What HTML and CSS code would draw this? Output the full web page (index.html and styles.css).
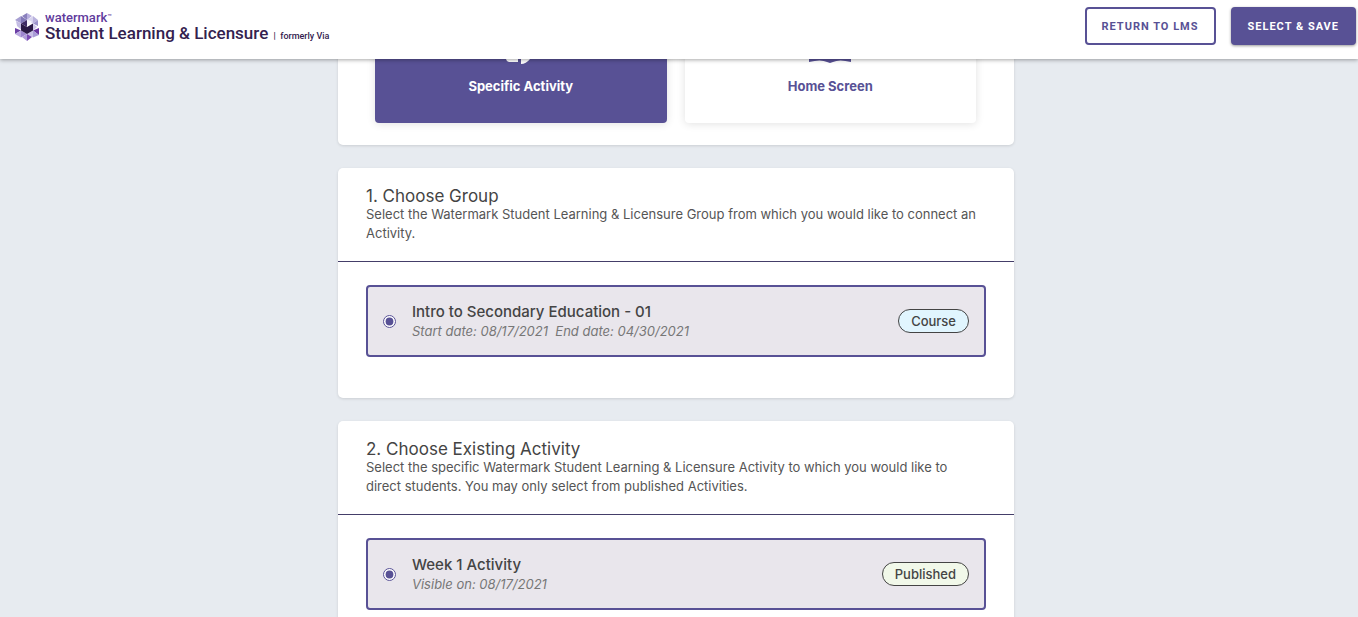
FILE: index.html
```html
<!DOCTYPE html>
<html lang="en">
<head>
    <meta charset="UTF-8">
    <meta name="viewport" content="width=device-width, initial-scale=1.0">
    <title>Student Learning &amp; Licensure</title>
    <link rel="stylesheet" href="styles.css">
</head>
<body>
    <header class="topbar">
        <div class="brand">
            <svg class="brand-mark" viewBox="0 0 24 28" aria-hidden="true">
                <path fill="#8a80bd" d="M12 0 7 3 12 7z"/>
                <path fill="#b7aede" d="M12 0v7l5-4z"/>
                <path fill="#a79fd2" d="M6 3 0 7l6 3.500z"/>
                <path fill="#8278b8" d="M6 3v7.500L12 7z"/>
                <path fill="#d8d4ee" d="M18 3v7.500L12 7z"/>
                <path fill="#b9b2dd" d="M18 3l5 4-5 3.500z"/>
                <path fill="#9d94cb" d="M23 7v6l-5-2.500z"/>
                <path fill="#c3bce3" d="M1 8l5 2.500v6L2 13z"/>
                <path fill="#cfc9e9" d="M18 10.500v7l4-3.500z"/>
                <path fill="#6b3fa5" d="M0 15v6l6-3.500z"/>
                <path fill="#b9a8df" d="M0 21l6-3.500v7z"/>
                <path fill="#6a35a0" d="M24 15v7l-6-4.500z"/>
                <path fill="#a99cd6" d="M24 22l-6-4.500v7z"/>
                <path fill="#9d86cf" d="M6 17.500v7l6-3.500z"/>
                <path fill="#c9bfe8" d="M18 17.500v7L12 21z"/>
                <path fill="#b09ddb" d="M12 21v7l-5-4z"/>
                <path fill="#7b4bb3" d="M12 21v7l5-4z"/>
                <path fill="#2a1a45" d="M6 10.500 12 14l6-3.500v7L12 21l-6-3.500z"/>
                <path fill="#3d2a63" d="M6 10.500 12 7v7z"/>
                <path fill="#f6f5fb" d="M12 7v6l5-5z"/>
            </svg>
            <div class="brand-text">
                <div class="brand-name">watermark<span class="tm">™</span></div>
                <div class="brand-product">Student Learning &amp; Licensure <span class="formerly">|&nbsp; formerly Via</span></div>
            </div>
        </div>
        <div class="actions">
            <button type="button" class="btn btn-outline">RETURN TO LMS</button>
            <button type="button" class="btn btn-solid">SELECT &amp; SAVE</button>
        </div>
    </header>

    <main class="content">
        <section class="card targets">
            <button type="button" class="target active">
                <svg viewBox="0 0 48 44" aria-hidden="true">
                    <path fill="currentColor" d="M9 4h28v13L21 33v8H13q-4 0-4-4zM24 37l15-17 6 6-12 12q-4 5-9 5z"/>
                </svg>
                Specific Activity
            </button>
            <button type="button" class="target">
                <svg viewBox="0 0 48 44" aria-hidden="true">
                    <path fill="currentColor" d="M3 6q12-4 21 2 9-6 21-2v35q-12-3-18 0l-3 1-3-1q-6-3-18 0zM7 9v25q10-2 15 1V11q-6-4-15-2zM41 9q-9-2-15 2v24q5-3 15-1z"/>
                </svg>
                Home Screen
            </button>
        </section>

        <section class="card">
            <div class="card-head">
                <h2>1. Choose Group</h2>
                <p>Select the Watermark Student Learning &amp; Licensure Group from which you would like to connect an Activity.</p>
            </div>
            <div class="card-body">
                <label class="option">
                    <input type="radio" name="group" checked>
                    <span class="option-text">
                        <span class="option-title">Intro to Secondary Education - 01</span>
                        <span class="option-dates">Start date: 08/17/2021&nbsp; End date: 04/30/2021</span>
                    </span>
                    <span class="tag tag-course">Course</span>
                </label>
            </div>
        </section>

        <section class="card">
            <div class="card-head">
                <h2>2. Choose Existing Activity</h2>
                <p>Select the specific Watermark Student Learning &amp; Licensure Activity to which you would like to direct students. You may only select from published Activities.</p>
            </div>
            <div class="card-body">
                <label class="option">
                    <input type="radio" name="activity" checked>
                    <span class="option-text">
                        <span class="option-title">Week 1 Activity</span>
                        <span class="option-dates">Visible on: 08/17/2021</span>
                    </span>
                    <span class="tag tag-published">Published</span>
                </label>
            </div>
        </section>
    </main>
</body>
</html>
```
FILE: styles.css
```css
*{
    margin: 0;
    padding: 0;
    box-sizing: border-box;
}

body{
    background: #e7ebf0;
    color: #444;
    font-family: Inter, "Liberation Sans", sans-serif;
    font-size: 13px;
}

/* top bar */
.topbar{
    position: sticky;
    top: 0;
    z-index: 2;
    display: flex;
    align-items: flex-start;
    justify-content: space-between;
    height: 59px;
    padding: 7px 2px 0 15px;
    background: #fff;
    box-shadow: 0 1px 4px rgba(0, 0, 0, 0.35);
}

.brand{
    display: flex;
    align-items: center;
    gap: 6px;
    padding-top: 3px;
    color: #33214f;
}

.brand-mark{
    width: 24px;
    height: 28px;
}

.brand-text{
    font-family: Roboto, sans-serif;
    font-weight: 500;
}

.brand-name{
    color: #5f3a9c;
    font-size: 13px;
    line-height: 15px;
}

.tm{
    font-size: 7px;
    vertical-align: top;
}

.brand-product{
    font-size: 17px;
    line-height: 16px;
}

.formerly{
    margin-left: 1px;
    font-size: 9px;
}

.actions{
    display: flex;
    gap: 15px;
}

.btn{
    height: 38px;
    padding: 0 15px;
    border: 2px solid #585195;
    border-radius: 4px;
    font-family: Roboto, sans-serif;
    font-size: 11px;
    font-weight: 700;
    letter-spacing: 1px;
    cursor: pointer;
}

.btn-outline{
    background: #fff;
    color: #585195;
}

.btn-solid{
    background: #585195;
    color: #fff;
    box-shadow: 0 1px 3px rgba(0, 0, 0, 0.4);
}

/* cards */
.content{
    display: flex;
    flex-direction: column;
    gap: 23px;
    width: 100%;
    max-width: 682px;
    margin: -59px auto 0;
    padding: 0 6px 22px 0;
}

.card{
    background: #fff;
    border-radius: 5px;
    box-shadow: 0 1px 3px rgba(0, 0, 0, 0.12);
}

.targets{
    display: grid;
    grid-template-columns: 1fr 1fr;
    gap: 18px;
    padding: 22px 38px 22px 37px;
}

.target{
    display: flex;
    flex-direction: column;
    align-items: center;
    justify-content: flex-end;
    gap: 12px;
    height: 101px;
    padding-bottom: 28px;
    border: 0;
    border-radius: 4px;
    background: #fff;
    color: #585195;
    box-shadow: 0 1px 8px rgba(0, 0, 0, 0.12);
    font-family: Inter, sans-serif;
    font-size: 13px;
    font-weight: 700;
    line-height: 18px;
    cursor: pointer;
}

.target svg{
    flex-shrink: 0;
    width: 48px;
    height: 44px;
}

.target.active{
    background: #585195;
    color: #fff;
}

.card-head{
    padding: 19px 28px 18px;
    border-bottom: 1px solid #443e69;
}

.card-head h2{
    font-size: 17px;
    font-weight: 400;
    line-height: 18px;
}

.card-head p{
    color: #555;
    line-height: 19px;
}

.card-body{
    padding: 23px 28px 41px;
}

.option{
    display: flex;
    align-items: center;
    height: 72px;
    padding: 0 15px 0 15px;
    border: 2px solid #585195;
    border-radius: 4px;
    background: #e9e6ec;
    cursor: pointer;
}

.option input{
    width: 13px;
    height: 13px;
    margin-right: 16px;
    accent-color: #585195;
}

.option-text{
    flex: 1;
}

.option-title{
    display: block;
    font-size: 15px;
    font-weight: 500;
    line-height: 20px;
}

.option-dates{
    display: block;
    color: #777;
    font-style: italic;
    line-height: 18px;
}

.tag{
    height: 24px;
    padding: 0 12px;
    border: 1px solid #444;
    border-radius: 12px;
    font-weight: 500;
    line-height: 22px;
}

.tag-course{
    background: #e1f5fe;
}

.tag-published{
    background: #f1f8e9;
}
```
